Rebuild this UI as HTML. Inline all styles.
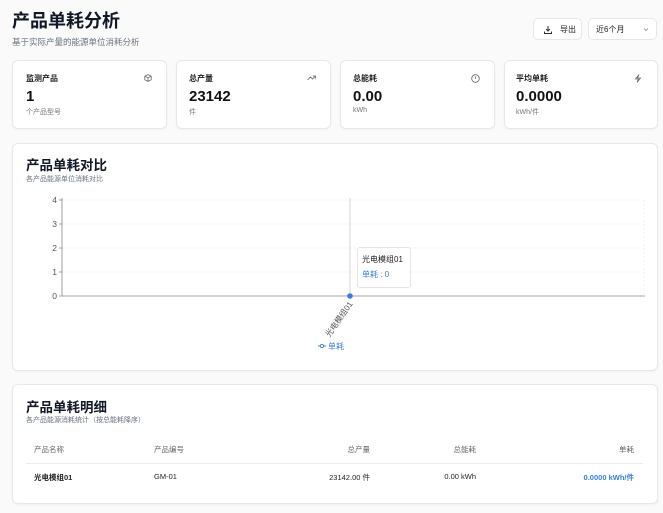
<!DOCTYPE html>
<html><head><meta charset="utf-8"><style>
*{margin:0;padding:0;box-sizing:border-box}
body{width:663px;height:513px;background:#fafafa;font-family:"Liberation Sans","Noto Sans CJK SC",sans-serif;color:#111827;position:relative;overflow:hidden}
.a{position:absolute;white-space:nowrap}
.card{position:absolute;background:#fff;border:1px solid #e8e8ec;border-radius:6px;box-shadow:0 1px 2px rgba(0,0,0,.04)}
.lbl{font-size:8px;font-weight:bold;color:#222}
.val{font-size:15px;font-weight:bold;color:#111}
.sub{font-size:7px;color:#777}
.btn{position:absolute;background:#fff;border:1px solid #e5e7eb;border-radius:5px;font-size:8px;color:#222}
.th{font-size:7.5px;color:#666}
.td{font-size:7.5px;color:#222}
</style></head><body>
<div class="a" style="left:12px;top:7px;font-size:18px;font-weight:bold">产品单耗分析</div>
<div class="a" style="left:12px;top:36px;font-size:8.5px;color:#6b7280">基于实际产量的能源单位消耗分析</div>
<div class="btn" style="left:533px;top:18px;width:49px;height:22px">
<svg class="a" style="left:9px;top:6px" width="10" height="10" viewBox="0 0 10 10" fill="none" stroke="#333" stroke-width="1"><path d="M5 1v5M3 4l2 2 2-2M1.5 6.5v2h7v-2"/></svg>
<span class="a" style="left:26px;top:5px">导出</span></div>
<div class="btn" style="left:588px;top:18px;width:69px;height:22px">
<span class="a" style="left:7px;top:5px">近6个月</span>
<svg class="a" style="left:54px;top:8px" width="6" height="5" viewBox="0 0 6 5" fill="none" stroke="#888" stroke-width=".8"><path d="M1 1.5l2 2 2-2"/></svg></div>

<div class="card" style="left:12px;top:60px;width:155px;height:69px"></div>
<div class="card" style="left:176px;top:60px;width:155px;height:69px"></div>
<div class="card" style="left:340px;top:60px;width:155px;height:69px"></div>
<div class="card" style="left:504px;top:60px;width:154px;height:69px"></div>

<div class="a lbl" style="left:26px;top:73px">监测产品</div>
<div class="a val" style="left:26px;top:88px">1</div>
<div class="a sub" style="left:26px;top:107px">个产品型号</div>
<svg class="a" style="left:144px;top:74px" width="8" height="8" viewBox="0 0 8 8" fill="none" stroke="#666" stroke-width=".8"><path d="M4 .6L7.2 2.2v3.6L4 7.4.8 5.8V2.2zM.8 2.2L4 3.8 7.2 2.2M4 3.8v3.6"/></svg>

<div class="a lbl" style="left:189px;top:73px">总产量</div>
<div class="a val" style="left:189px;top:88px">23142</div>
<div class="a sub" style="left:189px;top:107px">件</div>
<svg class="a" style="left:307px;top:75px" width="9" height="6" viewBox="0 0 9 6" fill="none" stroke="#666" stroke-width=".8"><path d="M.5 5l3-3 2 2 3-3M6 1h2.5v2.5"/></svg>

<div class="a lbl" style="left:353px;top:73px">总能耗</div>
<div class="a val" style="left:353px;top:88px">0.00</div>
<div class="a sub" style="left:353px;top:107px">kWh</div>
<svg class="a" style="left:471px;top:74px" width="9" height="9" viewBox="0 0 9 9" fill="none" stroke="#666" stroke-width=".8"><circle cx="4.5" cy="4.5" r="3.8"/><path d="M4.5 2.5v2.5"/></svg>

<div class="a lbl" style="left:516px;top:73px">平均单耗</div>
<div class="a val" style="left:516px;top:88px">0.0000</div>
<div class="a sub" style="left:516px;top:107px">kWh/件</div>
<svg class="a" style="left:634px;top:74px" width="8" height="9" viewBox="0 0 8 9" fill="none" stroke="#666" stroke-width=".8"><path d="M5 .5L1.5 5h3L3 8.5 6.5 4h-3z"/></svg>

<div class="card" style="left:12px;top:143px;width:646px;height:228px"></div>
<div class="a" style="left:26px;top:154px;font-size:13.5px;font-weight:bold">产品单耗对比</div>
<div class="a" style="left:26px;top:174px;font-size:7px;color:#6b7280">各产品能源单位消耗对比</div>
<svg class="a" style="left:0;top:0" width="663" height="513">
<g stroke="#ededed" stroke-width=".7" stroke-dasharray="2 2">
<line x1="62" y1="200" x2="644" y2="200"/><line x1="62" y1="224" x2="644" y2="224"/><line x1="62" y1="248" x2="644" y2="248"/><line x1="62" y1="272" x2="644" y2="272"/><line x1="644" y1="200" x2="644" y2="296"/></g>
<line x1="62" y1="198" x2="62" y2="296" stroke="#888" stroke-width=".8"/>
<line x1="59" y1="296" x2="645" y2="296" stroke="#888" stroke-width=".8"/>
<line x1="350" y1="198" x2="350" y2="296" stroke="#ccc" stroke-width=".8"/>
<g stroke="#888" stroke-width=".8"><line x1="59" y1="200" x2="62" y2="200"/><line x1="59" y1="224" x2="62" y2="224"/><line x1="59" y1="248" x2="62" y2="248"/><line x1="59" y1="272" x2="62" y2="272"/></g>
<g font-size="8.5" fill="#555" text-anchor="end" font-family="Liberation Sans"><text x="57" y="203">4</text><text x="57" y="227">3</text><text x="57" y="251">2</text><text x="57" y="275">1</text><text x="57" y="299">0</text></g>
<circle cx="350" cy="296" r="2.8" fill="#3b7ddd"/>
<text x="353" y="304" font-size="8" fill="#555" text-anchor="end" transform="rotate(-55 353 304)" font-family="Liberation Sans,Noto Sans CJK SC">光电模组01</text>
<line x1="318" y1="346" x2="326" y2="346" stroke="#3b7ddd" stroke-width="1"/><circle cx="322" cy="346" r="1.6" fill="#fff" stroke="#3b7ddd" stroke-width=".9"/>
</svg>
<div class="a" style="left:357px;top:247px;width:54px;height:41px;background:#fff;border:1px solid #e5e5e5;border-radius:3px"></div>
<div class="a" style="left:362px;top:254px;font-size:8px;color:#222">光电模组01</div>
<div class="a" style="left:362px;top:269px;font-size:8px;color:#3b7ddd">单耗 : 0</div>
<div class="a" style="left:328px;top:341px;font-size:8px;color:#3b7ddd">单耗</div>

<div class="card" style="left:12px;top:384px;width:646px;height:120px"></div>
<div class="a" style="left:26px;top:396px;font-size:13.5px;font-weight:bold">产品单耗明细</div>
<div class="a" style="left:26px;top:415px;font-size:7px;color:#6b7280">各产品能源消耗统计（按总能耗降序）</div>
<div class="a th" style="left:34px;top:444px">产品名称</div>
<div class="a th" style="left:154px;top:444px">产品编号</div>
<div class="a th" style="left:260px;top:444px;width:110px;text-align:right">总产量</div>
<div class="a th" style="left:370px;top:444px;width:106px;text-align:right">总能耗</div>
<div class="a th" style="left:530px;top:444px;width:104px;text-align:right">单耗</div>
<div class="a" style="left:26px;top:463px;width:617px;height:1px;background:#ececec"></div>
<div class="a td" style="left:34px;top:472px;font-weight:bold">光电模组01</div>
<div class="a td" style="left:154px;top:472px">GM-01</div>
<div class="a td" style="left:260px;top:472px;width:110px;text-align:right">23142.00 件</div>
<div class="a td" style="left:370px;top:472px;width:106px;text-align:right">0.00 kWh</div>
<div class="a td" style="left:530px;top:472px;width:104px;text-align:right;color:#3b7ddd;font-weight:bold">0.0000 kWh/件</div>
</body></html>
